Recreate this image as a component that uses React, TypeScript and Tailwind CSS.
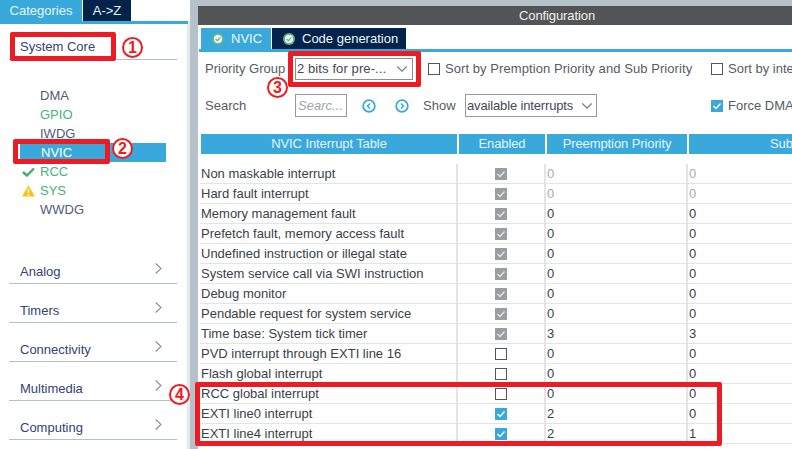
import React from "react";

const F = "font-['Liberation_Sans',Arial,sans-serif]";

const rows: [string, string, string, string, boolean][] = [
  ["Non maskable interrupt", "g", "0", "0", true],
  ["Hard fault interrupt", "g", "0", "0", true],
  ["Memory management fault", "g", "0", "0", false],
  ["Prefetch fault, memory access fault", "g", "0", "0", false],
  ["Undefined instruction or illegal state", "g", "0", "0", false],
  ["System service call via SWI instruction", "g", "0", "0", false],
  ["Debug monitor", "g", "0", "0", false],
  ["Pendable request for system service", "g", "0", "0", false],
  ["Time base: System tick timer", "g", "3", "3", false],
  ["PVD interrupt through EXTI line 16", "e", "0", "0", false],
  ["Flash global interrupt", "e", "0", "0", false],
  ["RCC global interrupt", "e", "0", "0", false],
  ["EXTI line0 interrupt", "b", "2", "0", false],
  ["EXTI line4 interrupt", "b", "2", "1", false],
];

function Check({ kind }: { kind: string }) {
  if (kind === "e") return <span className="block w-[12px] h-[12px] border border-[#555] bg-white shrink-0" />;
  return (
    <span className={`flex items-center justify-center w-[12px] h-[12px] shrink-0 ${kind === "g" ? "bg-[#9a9ea2]" : "bg-[#39a9dc]"}`}>
      <svg width="10" height="10" viewBox="0 0 10 10" fill="none" stroke={kind === "g" ? "#e4e6e8" : "#fff"} strokeWidth="1.4">
        <path d="M1.5 5 L4 7.5 L8.5 2.5" />
      </svg>
    </span>
  );
}

function Badge({ n }: { n: string }) {
  return (
    <span className="absolute flex items-center justify-center w-[21px] h-[21px] rounded-full border-2 border-[#ed1c24] bg-white text-[#ed1c24] text-[16px] font-bold leading-none">
      {n}
    </span>
  );
}

function Chevron() {
  return (
    <svg width="7" height="11" viewBox="0 0 7 11" fill="none" stroke="#8a8f94" strokeWidth="1.1">
      <path d="M0.7 0.5 L6 5.5 L0.7 10.5" />
    </svg>
  );
}

function Down() {
  return (
    <svg width="10" height="6" viewBox="0 0 10 6" fill="none" stroke="#777" strokeWidth="1.1">
      <path d="M0.3 0.5 L5 5.2 L9.7 0.5" />
    </svg>
  );
}

function Circle({ dir }: { dir: "l" | "r" }) {
  return (
    <svg width="14" height="14" viewBox="0 0 14 14" fill="none" stroke="#39a9dc">
      <circle cx="7" cy="7" r="5.8" strokeWidth="1.8" />
      <path d={dir === "l" ? "M8 4.5 L5.5 7 L8 9.5" : "M6 4.5 L8.5 7 L6 9.5"} strokeWidth="1.6" />
    </svg>
  );
}

function TabCheck() {
  return (
    <svg width="12" height="12" viewBox="0 0 12 12" className="shrink-0">
      <circle cx="6" cy="6" r="6" fill="#5cb88c" />
      <circle cx="6" cy="6" r="4" fill="#fff" />
      <path d="M3.6 6 L5.4 7.7 L8.4 4.4" fill="none" stroke="#5cb88c" strokeWidth="1.4" />
    </svg>
  );
}

function Section({ label }: { label: string }) {
  return (
    <div className="flex items-start justify-between h-[39px] pt-[17px] border-b border-[#b5c0c8] text-[#33427a] text-[13px] leading-[20px] pr-[15px]">
      <span className="pl-[11px]">{label}</span>
      <span className="pt-[1px] block leading-none"><Chevron /></span>
    </div>
  );
}

function Peripheral({ label, color, icon, active }: { label: string; color: string; icon?: React.ReactNode; active?: boolean }) {
  return (
    <div className={`flex items-center h-[19px] text-[13px] ml-[11px] w-[146px] ${active ? "bg-[#39a9dc] text-white" : color}`}>
      <span className="w-[20px] flex pl-[2px]">{icon}</span>
      <span className={active ? "pl-[1px]" : ""}>{label}</span>
    </div>
  );
}

export default function App() {
  return (
    <div className={`${F} relative w-[792px] h-[449px] overflow-hidden bg-[#b6c2c9] flex`}>
      {/* Sidebar */}
      <div className="w-[190px] h-full flex flex-col shrink-0 bg-[#e6eaec]">
        <div className="flex h-[21px] text-[13px] text-[#e8f3f9] bg-white shrink-0">
          <div className="w-[82px] bg-[#39a9dc] flex items-center justify-center">Categories</div>
          <div className="w-[48px] ml-[1px] bg-[#03234b] flex items-center justify-center">A-&gt;Z</div>
        </div>
        <div className="h-[3px] w-[188px] bg-[#39a9dc] shrink-0" />
        <div className="w-[187px] flex-1 bg-white pl-[9px] pr-[10px] flex flex-col min-h-0">
          <div className="h-[36px] pt-[13px] border-b border-[#b5c0c8] text-[#33427a] text-[13px] leading-[20px] pl-[11px] shrink-0">System Core</div>
          <div className="mt-[26px]">
            <Peripheral label="DMA" color="text-[#55597a]" />
            <Peripheral label="GPIO" color="text-[#45b37f]" />
            <Peripheral label="IWDG" color="text-[#55597a]" />
            <Peripheral label="NVIC" color="" active />
            <Peripheral label="RCC" color="text-[#45b37f]" icon={
              <svg width="13" height="10" viewBox="0 0 13 10" fill="none" stroke="#45a877" strokeWidth="2.4"><path d="M1 5 L4.8 8.5 L12 1.5" /></svg>
            } />
            <Peripheral label="SYS" color="text-[#45b37f]" icon={
              <svg width="13" height="12" viewBox="0 0 13 12"><path d="M6.5 0.5 L13 11.5 L0 11.5 Z" fill="#f5c518" /><path d="M6.5 4 V8 M6.5 9 V10.5" stroke="#fff" strokeWidth="1.4" /></svg>
            } />
            <Peripheral label="WWDG" color="text-[#55597a]" />
          </div>
          <div className="mt-[26px]">
            <Section label="Analog" />
            <Section label="Timers" />
            <Section label="Connectivity" />
            <Section label="Multimedia" />
            <Section label="Computing" />
          </div>
        </div>
      </div>

      {/* Main */}
      <div className="w-[718px] shrink-0 ml-[8px] pt-[6px] flex flex-col">
        <div className="h-[19px] bg-[#525455] text-[#f0f2f2] text-[13px] tracking-[-0.1px] flex items-center justify-center shrink-0">
          Configuration
        </div>
        <div className="bg-white flex-1 flex flex-col min-h-0 overflow-hidden">
          <div className="flex h-[24px] pl-[3px] gap-[1px] shrink-0 pt-[3px]">
            <div className="w-[70px] bg-[#39a9dc] text-[#eef7fb] text-[13px] flex items-center pl-[11px] gap-[7px] whitespace-nowrap"><TabCheck />NVIC</div>
            <div className="w-[134px] bg-[#03234b] text-[#eef7fb] text-[13px] flex items-center pl-[11px] gap-[7px] whitespace-nowrap"><TabCheck />Code generation</div>
          </div>
          <div className="h-[3px] ml-[1px] bg-[#39a9dc] shrink-0" />
          <div className="flex items-center h-[22px] mt-[6px] text-[13px] text-[#555c66] shrink-0 pl-[7px] whitespace-nowrap">
            <span className="w-[90px]">Priority Group</span>
            <div className="w-[118px] h-[22px] border border-[#8a8f94] flex items-center justify-between pl-[1px] pr-[5px] text-[#44495a] tracking-[0.1px]">2 bits for pre-...<Down /></div>
            <span className="ml-[15px] mr-[5px]"><Check kind="e" /></span>
            <span className="w-[266px] tracking-[0.07px]">Sort by Premption Priority and Sub Priority</span>
            <span className="mr-[5px]"><Check kind="e" /></span>
            <span>Sort by interrupts</span>
          </div>
          <div className="flex items-center h-[23px] mt-[14px] text-[13px] text-[#555c66] shrink-0 pl-[7px] whitespace-nowrap">
            <span className="w-[90px]">Search</span>
            <div className="w-[52px] h-[23px] border border-[#999] flex items-center pl-[2px] italic text-[#a0a4a8]">Searc...</div>
            <span className="ml-[15px] flex"><Circle dir="l" /></span>
            <span className="ml-[19px] flex"><Circle dir="r" /></span>
            <span className="ml-[14px] w-[42px]">Show</span>
            <div className="w-[132px] h-[23px] border border-[#999] flex items-center justify-between pl-[1px] pr-[4px] text-[#44495a] tracking-[-0.15px]">available interrupts<Down /></div>
            <span className="ml-[114px] mr-[5px]"><Check kind="b" /></span>
            <span>Force DMA channels</span>
          </div>
          <div className="grid grid-cols-[256px_86px_140px_228px] mt-[17px] pl-[3px] gap-x-[2px] h-[19px] text-[13px] text-[#e6f3fa] shrink-0 tracking-[-0.1px]">
            <div className="bg-[#39a9dc] flex items-center justify-center">NVIC Interrupt Table</div>
            <div className="bg-[#39a9dc] flex items-center justify-center">Enabled</div>
            <div className="bg-[#39a9dc] flex items-center justify-center">Preemption Priority</div>
            <div className="bg-[#39a9dc] flex items-center justify-center">Sub Priority</div>
          </div>
          <div className="h-[11px] shrink-0" />
          {rows.map((r) => (
            <div key={r[0]} className="grid grid-cols-[258px_88px_142px_1fr] ml-[2px] h-[20px] shrink-0 border-b border-[#e2e4e6] text-[13px] text-[#3a3f4a] items-center">
              <div className="pl-[1px] whitespace-nowrap border-r-2 border-[#e2e4e6] h-full flex items-center">{r[0]}</div>
              <div className="flex justify-center border-r-2 border-[#e2e4e6] h-full items-center"><Check kind={r[1]} /></div>
              <div className={`pl-[1px] border-r-2 border-[#e2e4e6] h-full flex items-center ${r[4] ? "text-[#a8acb0]" : ""}`}>{r[2]}</div>
              <div className={`pl-[1px] ${r[4] ? "text-[#a8acb0]" : ""}`}>{r[3]}</div>
            </div>
          ))}
        </div>
      </div>

      {/* Annotations */}
      <div className="absolute left-[10px] top-[32px] w-[106px] h-[29px] border-[5px] border-[#ed1c24] rounded-[2px]" />
      <div className="absolute left-[13px] top-[139px] w-[97px] h-[25px] border-[5px] border-[#ed1c24] rounded-[2px]" />
      <div className="absolute left-[288px] top-[51px] w-[133px] h-[36px] border-[5px] border-[#ed1c24] rounded-[2px]" />
      <div className="absolute left-[195px] top-[382px] w-[527px] h-[64px] border-[5px] border-[#ed1c24] rounded-[2px]" />
      <div className="absolute left-[122px] top-[37px]"><Badge n="1" /></div>
      <div className="absolute left-[112px] top-[138px]"><Badge n="2" /></div>
      <div className="absolute left-[267px] top-[77px]"><Badge n="3" /></div>
      <div className="absolute left-[169px] top-[384px]"><Badge n="4" /></div>
    </div>
  );
}
